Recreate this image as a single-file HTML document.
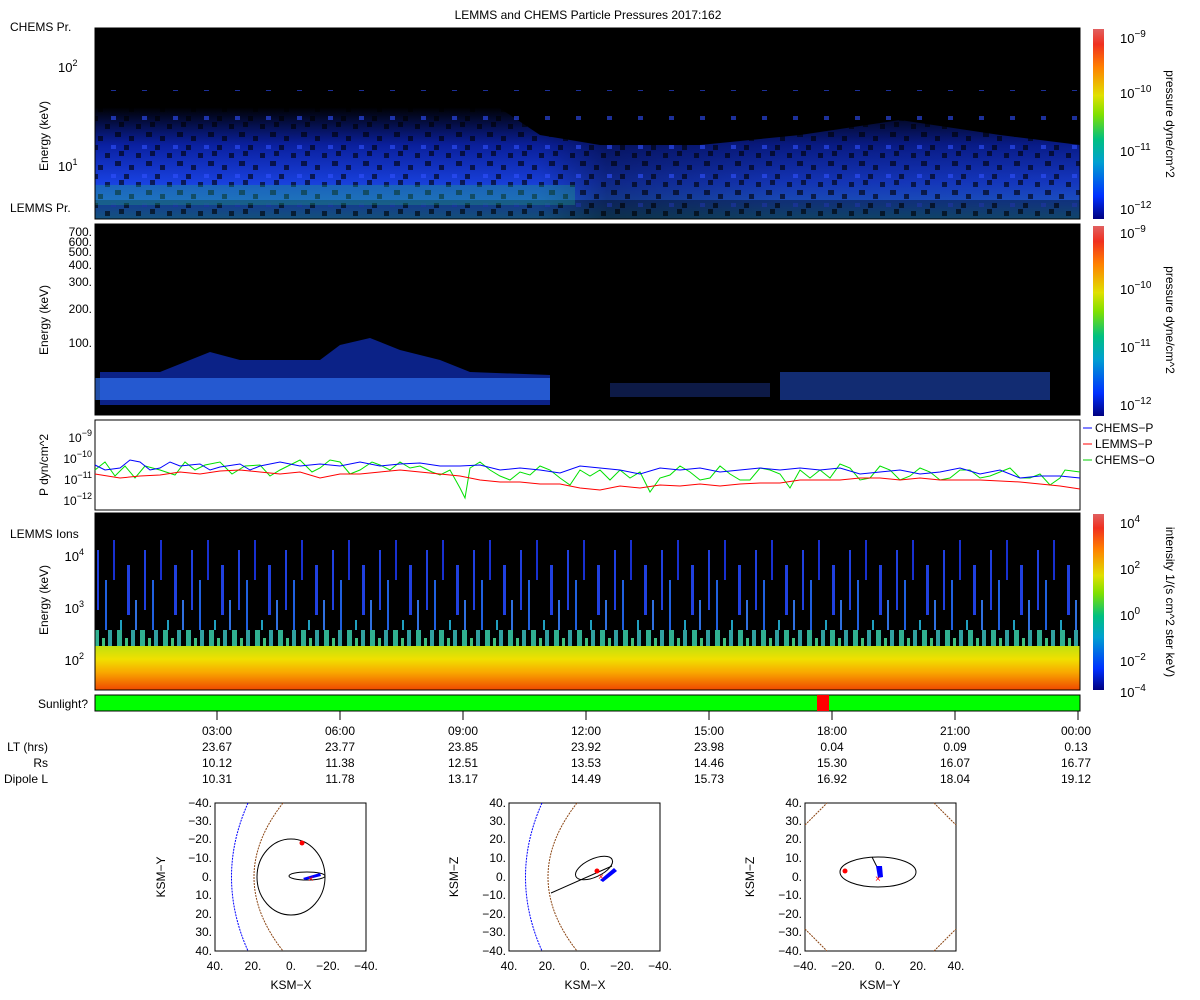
<!DOCTYPE html>
<html><head><meta charset="utf-8"><style>
body{margin:0;background:#fff;}
svg{display:block;font-family:"Liberation Sans",sans-serif;}
</style></head><body>
<svg width="1200" height="1000" viewBox="0 0 1200 1000" xmlns="http://www.w3.org/2000/svg">
<defs>
<linearGradient id="cb1" x1="0" y1="1" x2="0" y2="0">
<stop offset="0" stop-color="#000080"/><stop offset="0.12" stop-color="#0030ff"/><stop offset="0.3" stop-color="#00a0d0"/><stop offset="0.42" stop-color="#00c080"/><stop offset="0.55" stop-color="#80e000"/><stop offset="0.65" stop-color="#e0e000"/><stop offset="0.8" stop-color="#ff8000"/><stop offset="0.92" stop-color="#f03020"/><stop offset="1" stop-color="#e06060"/>
</linearGradient>
<linearGradient id="p1" x1="0" y1="0" x2="0" y2="1">
<stop offset="0" stop-color="#000"/><stop offset="0.25" stop-color="#000"/><stop offset="0.5" stop-color="#0a20a0"/><stop offset="0.75" stop-color="#1840e0"/><stop offset="0.9" stop-color="#2060e0"/><stop offset="1" stop-color="#2080c0"/>
</linearGradient>
<linearGradient id="p1h" x1="0" y1="0" x2="1" y2="0">
<stop offset="0" stop-color="#000" stop-opacity="0"/><stop offset="0.45" stop-color="#000" stop-opacity="0.05"/><stop offset="0.52" stop-color="#000" stop-opacity="0.4"/><stop offset="0.7" stop-color="#000" stop-opacity="0.2"/><stop offset="1" stop-color="#000" stop-opacity="0.15"/>
</linearGradient>
<linearGradient id="p4" x1="0" y1="0" x2="0" y2="1">
<stop offset="0" stop-color="#c0e010"/><stop offset="0.3" stop-color="#f0e000"/><stop offset="0.6" stop-color="#f8a800"/><stop offset="1" stop-color="#f04800"/>
</linearGradient>
<pattern id="streaks" width="47" height="180" patternUnits="userSpaceOnUse">
<rect x="3" y="10" width="2" height="60" fill="#2040e0"/><rect x="11" y="40" width="2" height="90" fill="#2060e0"/><rect x="19" y="0" width="2" height="40" fill="#1830d0"/><rect x="26" y="80" width="2" height="40" fill="#20a0c0"/><rect x="33" y="25" width="3" height="50" fill="#2040e0"/><rect x="41" y="60" width="2" height="60" fill="#3070e0"/><rect x="7" y="95" width="2" height="30" fill="#20a0b0"/>
</pattern>
<pattern id="gstreak" width="23" height="30" patternUnits="userSpaceOnUse">
<rect x="0" y="0" width="23" height="30" fill="#000"/><rect x="2" y="0" width="5" height="30" fill="#30b090"/><rect x="10" y="8" width="3" height="22" fill="#40c080"/><rect x="16" y="0" width="4" height="30" fill="#30a0a0"/>
</pattern>
<pattern id="noise1" width="31" height="29" patternUnits="userSpaceOnUse">
<rect x="0" y="0" width="5" height="5" fill="#000"/><rect x="12" y="8" width="5" height="5" fill="#000"/><rect x="22" y="16" width="6" height="5" fill="#000"/><rect x="5" y="20" width="5" height="5" fill="#000"/><rect x="18" y="0" width="5" height="4" fill="#3050ff"/><rect x="26" y="6" width="5" height="5" fill="#000"/>
</pattern>
</defs>

<text x="588" y="19" font-size="12" text-anchor="middle">LEMMS and CHEMS Particle Pressures  2017:162</text>

<!-- Panel 1 -->
<rect x="95" y="28" width="985" height="191" fill="#000"/>
<path d="M95 219 L95 95 L140 90 L200 105 L260 95 L310 100 L370 70 L420 105 L480 95 L540 135 L600 145 L700 145 L800 135 L900 120 L1000 135 L1080 145 L1080 219 Z" fill="url(#p1)"/>
<rect x="95" y="28" width="985" height="191" fill="url(#p1h)"/>
<rect x="95" y="90" width="985" height="129" fill="url(#noise1)" opacity="0.6"/>
<rect x="95" y="200" width="985" height="19" fill="#000" opacity="0.35"/>
<rect x="95" y="185" width="480" height="20" fill="#20a080" opacity="0.35"/>
<rect x="95" y="28" width="985" height="191" fill="none" stroke="#000"/>
<text x="10" y="31" font-size="12">CHEMS Pr.</text>
<text x="10" y="212" font-size="12">LEMMS Pr.</text>
<text x="58" y="72" font-size="13">10<tspan dy="-6" font-size="9">2</tspan></text>
<text x="58" y="171" font-size="13">10<tspan dy="-6" font-size="9">1</tspan></text>
<text transform="translate(48,136) rotate(-90)" font-size="12" text-anchor="middle">Energy (keV)</text>

<!-- Panel 2 -->
<rect x="95" y="224" width="985" height="191" fill="#000"/>
<path d="M100 405 L100 372 L160 372 L210 352 L240 360 L320 360 L340 345 L370 338 L400 350 L440 360 L470 372 L550 375 L550 405 Z" fill="#1030c0" opacity="0.7"/>
<rect x="95" y="378" width="455" height="22" fill="#3070f0" opacity="0.7"/>
<rect x="610" y="383" width="160" height="14" fill="#2040b0" opacity="0.4"/>
<rect x="780" y="372" width="270" height="28" fill="#2050d0" opacity="0.55"/>
<rect x="95" y="224" width="985" height="191" fill="none" stroke="#000"/>
<g font-size="12" text-anchor="end">
<text x="92" y="236">700.</text><text x="92" y="246">600.</text><text x="92" y="256">500.</text><text x="92" y="269">400.</text><text x="92" y="286">300.</text><text x="92" y="313">200.</text><text x="92" y="347">100.</text>
</g>
<text transform="translate(48,320) rotate(-90)" font-size="12" text-anchor="middle">Energy (keV)</text>

<!-- Colorbars -->
<rect x="1093" y="29" width="11" height="190" fill="url(#cb1)"/>
<rect x="1093" y="226" width="11" height="190" fill="url(#cb1)"/>
<rect x="1093" y="514" width="11" height="176" fill="url(#cb1)"/>
<g font-size="13">
<text x="1120" y="43">10<tspan dy="-6" font-size="10">−9</tspan></text>
<text x="1120" y="98">10<tspan dy="-6" font-size="10">−10</tspan></text>
<text x="1120" y="156">10<tspan dy="-6" font-size="10">−11</tspan></text>
<text x="1120" y="214">10<tspan dy="-6" font-size="10">−12</tspan></text>
<text x="1120" y="238">10<tspan dy="-6" font-size="10">−9</tspan></text>
<text x="1120" y="294">10<tspan dy="-6" font-size="10">−10</tspan></text>
<text x="1120" y="352">10<tspan dy="-6" font-size="10">−11</tspan></text>
<text x="1120" y="410">10<tspan dy="-6" font-size="10">−12</tspan></text>
<text x="1120" y="528">10<tspan dy="-6" font-size="10">4</tspan></text>
<text x="1120" y="574">10<tspan dy="-6" font-size="10">2</tspan></text>
<text x="1120" y="620">10<tspan dy="-6" font-size="10">0</tspan></text>
<text x="1120" y="666">10<tspan dy="-6" font-size="10">−2</tspan></text>
<text x="1120" y="697">10<tspan dy="-6" font-size="10">−4</tspan></text>
</g>
<g font-size="12" text-anchor="middle">
<text transform="translate(1166,124) rotate(90)">pressure dyne/cm^2</text>
<text transform="translate(1166,320) rotate(90)">pressure dyne/cm^2</text>
<text transform="translate(1166,602) rotate(90)">intensity 1/(s cm^2 ster keV)</text>
</g>

<!-- Panel 3 -->
<rect x="95" y="420" width="985" height="90" fill="#fff" stroke="#000"/>
<g font-size="12" text-anchor="end">
<text x="92" y="442">10<tspan dy="-6" font-size="9">−9</tspan></text>
<text x="92" y="463">10<tspan dy="-6" font-size="9">−10</tspan></text>
<text x="92" y="484">10<tspan dy="-6" font-size="9">−11</tspan></text>
<text x="92" y="505">10<tspan dy="-6" font-size="9">−12</tspan></text>
</g>
<text transform="translate(48,465) rotate(-90)" font-size="12" text-anchor="middle">P dyn/cm^2</text>
<polyline fill="none" stroke="#00e000" stroke-width="1" points="95,470 105,462 115,476 125,466 135,478 145,466 160,470 175,475 185,462 195,470 205,465 220,462 232,474 245,466 260,465 270,476 280,470 300,460 312,472 320,468 330,460 340,462 350,474 360,470 372,462 380,465 390,470 400,462 410,468 420,466 432,472 440,475 450,470 460,488 465,498 470,468 480,462 490,470 500,476 510,480 520,472 530,475 540,466 550,470 560,478 570,485 580,470 590,476 600,470 610,480 620,470 630,478 640,472 650,492 660,478 670,475 680,466 690,472 700,480 710,478 720,466 730,474 740,480 750,480 760,468 770,470 780,474 790,488 800,470 810,478 820,470 830,478 840,464 850,468 860,480 870,478 880,466 890,470 900,480 910,476 920,468 930,472 940,480 950,478 960,470 970,470 980,478 990,476 1000,472 1010,468 1020,478 1030,478 1040,474 1050,485 1060,478 1065,470 1080,472"/>
<polyline fill="none" stroke="#0000ff" stroke-width="1" points="95,465 105,470 120,468 130,460 140,462 150,470 160,468 170,462 180,466 200,464 210,470 220,467 240,464 250,470 260,466 280,462 300,466 320,464 340,466 360,462 380,466 400,464 420,463 440,466 460,466 480,465 500,470 520,468 540,470 560,473 580,466 600,468 620,470 640,474 660,468 680,470 700,468 720,472 740,470 760,468 780,470 800,468 820,470 840,468 860,474 880,472 900,470 920,474 940,472 960,468 980,474 1000,470 1020,478 1040,476 1060,476 1080,478"/>
<polyline fill="none" stroke="#ff0000" stroke-width="1" points="95,474 120,478 140,476 160,475 180,472 200,474 220,471 240,470 260,472 280,474 300,472 320,478 340,474 360,474 380,472 400,470 420,472 440,474 460,476 480,480 500,482 520,482 540,484 560,484 580,488 600,490 620,486 640,488 660,485 680,486 700,484 720,486 740,484 760,483 780,483 800,480 820,480 840,480 860,478 880,478 900,480 920,478 940,480 960,480 980,480 1000,481 1020,482 1040,484 1060,486 1080,489"/>
<g font-size="12">
<line x1="1083" y1="428" x2="1092" y2="428" stroke="#00f"/><text x="1095" y="432">CHEMS−P</text>
<line x1="1083" y1="444" x2="1092" y2="444" stroke="#f00"/><text x="1095" y="448">LEMMS−P</text>
<line x1="1083" y1="460" x2="1092" y2="460" stroke="#0c0"/><text x="1095" y="464">CHEMS−O</text>
</g>

<!-- Panel 4 -->
<rect x="95" y="513" width="985" height="177" fill="#000"/>
<rect x="95" y="513" width="985" height="120" fill="url(#streaks)"/>
<rect x="95" y="630" width="985" height="17" fill="url(#gstreak)"/>
<rect x="95" y="646" width="985" height="44" fill="url(#p4)"/>
<rect x="95" y="513" width="985" height="177" fill="none" stroke="#000"/>
<text x="10" y="538" font-size="12">LEMMS Ions</text>
<g font-size="13" text-anchor="end">
<text x="84" y="561">10<tspan dy="-6" font-size="9">4</tspan></text>
<text x="84" y="613">10<tspan dy="-6" font-size="9">3</tspan></text>
<text x="84" y="665">10<tspan dy="-6" font-size="9">2</tspan></text>
</g>
<text transform="translate(48,600) rotate(-90)" font-size="12" text-anchor="middle">Energy (keV)</text>

<!-- Sunlight -->
<rect x="95" y="695" width="985" height="16" fill="#00ff00" stroke="#000"/>
<rect x="817" y="695" width="12" height="16" fill="#ff0000"/>
<text x="88" y="708" font-size="12" text-anchor="end">Sunlight?</text>
<g stroke="#000">
<line x1="217" y1="711" x2="217" y2="720"/><line x1="340" y1="711" x2="340" y2="720"/><line x1="463" y1="711" x2="463" y2="720"/><line x1="586" y1="711" x2="586" y2="720"/><line x1="709" y1="711" x2="709" y2="720"/><line x1="832" y1="711" x2="832" y2="720"/><line x1="955" y1="711" x2="955" y2="720"/><line x1="1078" y1="711" x2="1078" y2="720"/>
</g>
<g font-size="12" text-anchor="middle">
<text x="217" y="735">03:00</text><text x="340" y="735">06:00</text><text x="463" y="735">09:00</text><text x="586" y="735">12:00</text><text x="709" y="735">15:00</text><text x="832" y="735">18:00</text><text x="955" y="735">21:00</text><text x="1076" y="735">00:00</text>
<text x="217" y="751">23.67</text><text x="340" y="751">23.77</text><text x="463" y="751">23.85</text><text x="586" y="751">23.92</text><text x="709" y="751">23.98</text><text x="832" y="751">0.04</text><text x="955" y="751">0.09</text><text x="1076" y="751">0.13</text>
<text x="217" y="767">10.12</text><text x="340" y="767">11.38</text><text x="463" y="767">12.51</text><text x="586" y="767">13.53</text><text x="709" y="767">14.46</text><text x="832" y="767">15.30</text><text x="955" y="767">16.07</text><text x="1076" y="767">16.77</text>
<text x="217" y="783">10.31</text><text x="340" y="783">11.78</text><text x="463" y="783">13.17</text><text x="586" y="783">14.49</text><text x="709" y="783">15.73</text><text x="832" y="783">16.92</text><text x="955" y="783">18.04</text><text x="1076" y="783">19.12</text>
</g>
<g font-size="12" text-anchor="end">
<text x="48" y="751">LT (hrs)</text><text x="48" y="767">Rs</text><text x="48" y="783">Dipole L</text>
</g>

<!-- Orbit plot 1 -->
<g font-size="12">
<rect x="215" y="803" width="151" height="148" fill="#fff" stroke="#000"/>
<path d="M248 803 Q215 877 248 951" fill="none" stroke="#00f" stroke-dasharray="2,1"/>
<path d="M283 803 Q225 877 283 951" fill="none" stroke="#8b4513" stroke-dasharray="2,1"/>
<ellipse cx="291" cy="877" rx="34" ry="38" fill="none" stroke="#000"/>
<ellipse cx="307" cy="876" rx="18" ry="4" fill="none" stroke="#000"/>
<path d="M303 878 L320 873 L321 876 L305 880 Z" fill="#00f"/>
<circle cx="302" cy="843" r="2.5" fill="#f00"/>
<text x="308" y="882" fill="#f00" font-size="10">×</text>
<g text-anchor="end"><text x="212" y="807">−40.</text><text x="212" y="825">−30.</text><text x="212" y="843">−20.</text><text x="212" y="862">−10.</text><text x="212" y="881">0.</text><text x="212" y="899">10.</text><text x="212" y="918">20.</text><text x="212" y="936">30.</text><text x="212" y="955">40.</text></g>
<g text-anchor="middle"><text x="215" y="970">40.</text><text x="253" y="970">20.</text><text x="291" y="970">0.</text><text x="328" y="970">−20.</text><text x="366" y="970">−40.</text><text x="291" y="989">KSM−X</text></g>
<text transform="translate(165,877) rotate(-90)" text-anchor="middle">KSM−Y</text>
</g>

<!-- Orbit plot 2 -->
<g font-size="12">
<rect x="509" y="803" width="151" height="148" fill="#fff" stroke="#000"/>
<path d="M542 803 Q509 877 542 951" fill="none" stroke="#00f" stroke-dasharray="2,1"/>
<path d="M577 803 Q519 877 577 951" fill="none" stroke="#8b4513" stroke-dasharray="2,1"/>
<ellipse cx="594" cy="868" rx="20" ry="9" transform="rotate(-25 594 868)" fill="none" stroke="#000"/>
<line x1="551" y1="893" x2="612" y2="866" stroke="#000"/>
<path d="M600 880 L614 868 L617 871 L603 882 Z" fill="#00f"/>
<circle cx="597" cy="871" r="2.5" fill="#f00"/>
<text x="598" y="880" fill="#f00" font-size="10">×</text>
<g text-anchor="end"><text x="506" y="807">40.</text><text x="506" y="825">30.</text><text x="506" y="843">20.</text><text x="506" y="862">10.</text><text x="506" y="881">0.</text><text x="506" y="899">−10.</text><text x="506" y="918">−20.</text><text x="506" y="936">−30.</text><text x="506" y="955">−40.</text></g>
<g text-anchor="middle"><text x="509" y="970">40.</text><text x="547" y="970">20.</text><text x="585" y="970">0.</text><text x="622" y="970">−20.</text><text x="660" y="970">−40.</text><text x="585" y="989">KSM−X</text></g>
<text transform="translate(458,877) rotate(-90)" text-anchor="middle">KSM−Z</text>
</g>

<!-- Orbit plot 3 -->
<g font-size="12">
<rect x="805" y="803" width="151" height="148" fill="#fff" stroke="#000"/>
<path d="M805 825 L827 803 M934 803 L956 825 M805 929 L827 951 M934 951 L956 929" fill="none" stroke="#8b4513" stroke-dasharray="2,1"/>
<ellipse cx="878" cy="872" rx="38" ry="15" fill="none" stroke="#000"/>
<line x1="872" y1="857" x2="882" y2="877" stroke="#000"/>
<path d="M876 866 L882 866 L883 877 L878 878 Z" fill="#00f"/>
<circle cx="845" cy="871" r="2.5" fill="#f00"/>
<text x="875" y="882" fill="#f00" font-size="10">×</text>
<g text-anchor="end"><text x="802" y="807">40.</text><text x="802" y="825">30.</text><text x="802" y="843">20.</text><text x="802" y="862">10.</text><text x="802" y="881">0.</text><text x="802" y="899">−10.</text><text x="802" y="918">−20.</text><text x="802" y="936">−30.</text><text x="802" y="955">−40.</text></g>
<g text-anchor="middle"><text x="805" y="970">−40.</text><text x="843" y="970">−20.</text><text x="880" y="970">0.</text><text x="918" y="970">20.</text><text x="956" y="970">40.</text><text x="880" y="989">KSM−Y</text></g>
<text transform="translate(754,877) rotate(-90)" text-anchor="middle">KSM−Z</text>
</g>
</svg>
</body></html>
